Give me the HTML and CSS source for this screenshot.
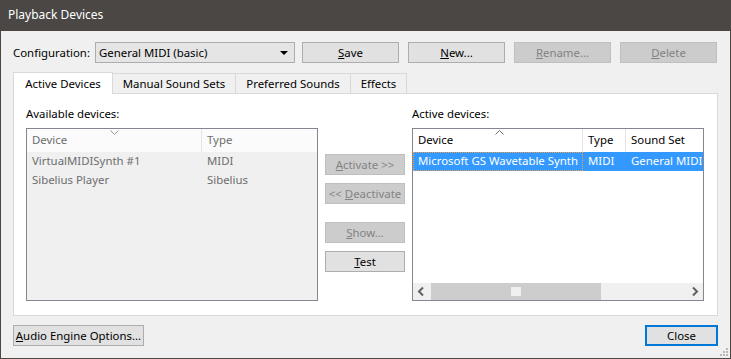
FILE: index.html
```html
<!DOCTYPE html>
<html lang="en">
<head>
    <meta charset="UTF-8">
    <title>Playback Devices</title>
    <link rel="stylesheet" href="styles.css">
</head>
<body>
    <div class="window">
        <div class="titlebar">Playback Devices</div>

        <div class="content">
            <div class="config-row">
                <span class="config-label">Configuration:</span>
                <div class="combo">
                    <span>General MIDI (basic)</span>
                    <svg class="combo-arrow" width="8" height="4" viewBox="0 0 8 4"><path d="M0 0H8L4 4Z" fill="#000"/></svg>
                </div>
                <button class="btn btn-top"><u>S</u>ave</button>
                <button class="btn btn-top"><u>N</u>ew...</button>
                <button class="btn btn-top" disabled><u>R</u>ename...</button>
                <button class="btn btn-top" disabled><u>D</u>elete</button>
            </div>

            <div class="tabs">
                <div class="tab tab-active" style="width: 100px">Active Devices</div>
                <div class="tab" style="width: 123px">Manual Sound Sets</div>
                <div class="tab" style="width: 115px">Preferred Sounds</div>
                <div class="tab" style="width: 56px">Effects</div>
            </div>

            <div class="panel">
                <div class="list-label">Available devices:</div>
                <div></div>
                <div class="list-label">Active devices:</div>

                <div class="list list-disabled">
                    <div class="list-head">
                        <div class="col" style="width: 175px">Device</div>
                        <div class="col">Type</div>
                        <svg class="sort-arrow" style="left: 83px" width="9" height="5" viewBox="0 0 9 5"><path d="M0.5 0.5L4.5 4.5L8.5 0.5" fill="none" stroke="#9a9a9a"/></svg>
                    </div>
                    <div class="row">
                        <div class="cell" style="width: 175px">VirtualMIDISynth #1</div>
                        <div class="cell">MIDI</div>
                    </div>
                    <div class="row">
                        <div class="cell" style="width: 175px">Sibelius Player</div>
                        <div class="cell">Sibelius</div>
                    </div>
                </div>

                <div class="middle">
                    <button class="btn" disabled><u>A</u>ctivate &gt;&gt;</button>
                    <button class="btn" disabled>&lt;&lt; <u>D</u>eactivate</button>
                    <button class="btn btn-gap" disabled><u>S</u>how...</button>
                    <button class="btn"><u>T</u>est</button>
                </div>

                <div class="list">
                    <div class="list-head">
                        <div class="col" style="width: 170px">Device</div>
                        <div class="col" style="width: 43px">Type</div>
                        <div class="col">Sound Set</div>
                        <svg class="sort-arrow" style="left: 82px" width="9" height="5" viewBox="0 0 9 5"><path d="M0.5 4.5L4.5 0.5L8.5 4.5" fill="none" stroke="#6d6d6d"/></svg>
                    </div>
                    <div class="row row-selected">
                        <div class="cell cell-focus" style="width: 170px">Microsoft GS Wavetable Synth</div>
                        <div class="cell" style="width: 43px">MIDI</div>
                        <div class="cell">General MIDI</div>
                    </div>
                    <div class="list-fill"></div>
                    <div class="hscroll">
                        <svg width="17" height="17" viewBox="0 0 17 17"><path d="M10 4.5L6 8.5L10 12.5" fill="none" stroke="#606060" stroke-width="2"/></svg>
                        <div class="track"><div class="thumb"><span class="grip"></span></div></div>
                        <svg width="17" height="17" viewBox="0 0 17 17"><path d="M7 4.5L11 8.5L7 12.5" fill="none" stroke="#606060" stroke-width="2"/></svg>
                    </div>
                </div>
            </div>

            <div class="bottom-row">
                <button class="btn btn-engine"><u>A</u>udio Engine Options...</button>
                <button class="btn btn-close">Close</button>
            </div>
        </div>

        <svg class="resize-grip" width="9" height="9" viewBox="0 0 9 9">
            <rect x="6" y="0" width="2" height="2" fill="#b8b8b8"/>
            <rect x="3" y="3" width="2" height="2" fill="#b8b8b8"/>
            <rect x="6" y="3" width="2" height="2" fill="#b8b8b8"/>
            <rect x="0" y="6" width="2" height="2" fill="#b8b8b8"/>
            <rect x="3" y="6" width="2" height="2" fill="#b8b8b8"/>
            <rect x="6" y="6" width="2" height="2" fill="#b8b8b8"/>
        </svg>
    </div>
</body>
</html>
```

FILE: styles.css
```css
body {
    margin: 0;
    font-family: "Noto Sans", "Open Sans", sans-serif;
    font-size: 11.4px;
    color: #000;
    background-color: #f0f0f0;
}

.window {
    width: 731px;
    height: 359px;
    box-sizing: border-box;
    border: 1px solid #4a4744;
    border-top: none;
    background-color: #f0f0f0;
    position: relative;
    overflow: hidden;
}

.titlebar {
    height: 31px;
    line-height: 30px;
    background-color: #4a4744;
    color: white;
    padding-left: 8px;
    margin: 0 -1px;
    font-size: 12px;
}

.content {
    padding: 11px 12px 0 12px;
}

.config-row {
    display: flex;
    align-items: center;
    height: 21px;
}

.config-label {
    width: 82px;
}

.combo {
    width: 200px;
    height: 21px;
    box-sizing: border-box;
    border: 1px solid #adadad;
    background-color: #e5e5e5;
    display: flex;
    align-items: center;
    justify-content: space-between;
    padding: 0 6px 0 3px;
}

.btn {
    font-family: inherit;
    font-size: 11.4px;
    height: 21px;
    box-sizing: border-box;
    border: 1px solid #adadad;
    background-color: #e1e1e1;
    color: #000;
    padding: 0;
    margin: 0;
    line-height: 19px;
    white-space: nowrap;
}

.btn:disabled {
    background-color: #cccccc;
    border-color: #bfbfbf;
    color: #838383;
}

.btn-top {
    width: 97px;
    margin-left: 9px;
}

.config-row .btn-top:first-of-type {
    margin-left: 7px;
}

.tabs {
    display: flex;
    align-items: flex-end;
    margin-top: 8px;
    height: 22px;
}

.tab {
    height: 20px;
    box-sizing: border-box;
    border: 1px solid #d9d9d9;
    border-bottom: none;
    border-left: none;
    text-align: center;
    line-height: 19px;
    background-color: #f0f0f0;
}

.tab-active {
    height: 22px;
    border-left: 1px solid #d9d9d9;
    background-color: white;
    line-height: 21px;
    position: relative;
    top: 1px;
}

.panel {
    height: 223px;
    box-sizing: border-box;
    border: 1px solid #d9d9d9;
    background-color: white;
    padding: 12px 12px 0 12px;
    display: grid;
    grid-template-columns: 292px 80px 292px;
    grid-template-rows: 22px 173px;
    column-gap: 7px;
}

.list-label {
    line-height: 16px;
}

.list {
    border: 1px solid #828790;
    background-color: white;
    display: flex;
    flex-direction: column;
    position: relative;
}

.list-disabled {
    background-color: #f0f0f0;
    color: #6d6d6d;
}

.list-head {
    display: flex;
    height: 23px;
    line-height: 22px;
    background-color: white;
    position: relative;
}

.list-disabled .list-head {
    background-color: #fbfbfb;
}

.col {
    padding-left: 5px;
    box-sizing: border-box;
    border-right: 1px solid #e5e5e5;
}

.col:last-of-type {
    flex: 1;
    border-right: none;
}

.sort-arrow {
    position: absolute;
    top: 1px;
}

.row {
    display: flex;
    height: 19px;
    line-height: 18px;
}

.cell {
    padding-left: 5px;
    box-sizing: border-box;
    white-space: nowrap;
    overflow: hidden;
}

.row-selected {
    background-color: #3399ff;
    color: white;
}

.cell-focus {
    border: 1px dotted #f3a04a;
    padding-left: 4px;
    line-height: 16px;
}

.list-fill {
    flex: 1;
}

.hscroll {
    height: 17px;
    display: flex;
    background-color: #f0f0f0;
}

.track {
    flex: 1;
    position: relative;
}

.thumb {
    margin-left: 1px;
    width: 170px;
    height: 17px;
    background-color: #cdcdcd;
    display: flex;
    align-items: center;
    justify-content: center;
}

.grip {
    width: 10px;
    height: 9px;
    background-color: #f0f0f0;
}

.middle {
    display: flex;
    flex-direction: column;
    gap: 8px;
    padding-top: 26px;
}

.btn-gap {
    margin-top: 10px;
}

.bottom-row {
    display: flex;
    justify-content: space-between;
    margin-top: 9px;
}

.btn-engine {
    width: 131px;
}

.btn-close {
    width: 73px;
    border: 2px solid #0078d7;
    line-height: 17px;
}

.resize-grip {
    position: absolute;
    right: 1px;
    bottom: 1px;
}
```
